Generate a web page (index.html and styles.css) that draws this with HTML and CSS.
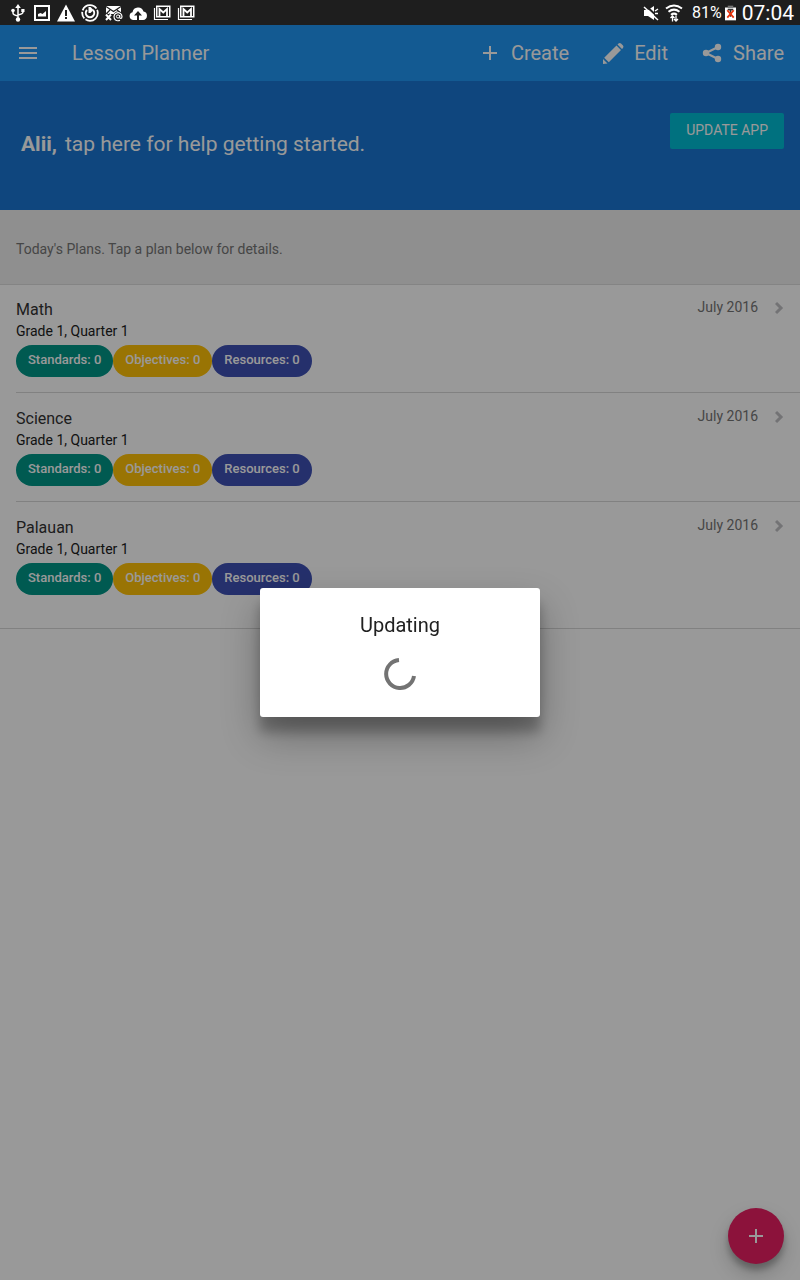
FILE: index.html
```html
<!DOCTYPE html>
<html lang="en">
<head>
<meta charset="utf-8">
<meta name="viewport" content="width=device-width, initial-scale=1">
<title>Lesson Planner</title>
<link rel="stylesheet" href="styles.css">
</head>
<body>
<div class="status">
  <div class="status-group status-left">
    <svg class="status-icon" viewBox="0 0 18 18"><path d="M9 3v11M4 6.500V9q0 2 5 3M14 6v2q0 2-5 3" fill="none" stroke="#fff" stroke-width="1.500"/><path d="M9 0l2.800 4H6.200zM12.300 5h3.200v3h-3.200z" fill="#fff"/><circle cx="4" cy="6.500" r="1.800" fill="#fff"/><circle cx="9" cy="15.500" r="2.200" fill="#fff"/></svg>
    <svg class="status-icon" viewBox="0 0 18 18"><path d="M2 2h14v14H2z" fill="none" stroke="#fff" stroke-width="2"/><path d="M5 12.500V10l2.500-1 2 1L13 7v5.500z" fill="#fff"/></svg>
    <svg class="status-icon" viewBox="0 0 18 18"><path d="M9 .5L18 17.500H0z" fill="#fff"/><path d="M9 6v6M9 13v2" stroke="#1e1e1e" stroke-width="2"/></svg>
    <svg class="status-icon" viewBox="0 0 18 18"><g fill="none" stroke="#fff"><circle cx="9" cy="9" r="7.800" stroke-width="1.800" stroke-dasharray="17 1.500 7 1.500"/><path d="M6 6A4.200 4.200 0 1 0 12 6" stroke-width="2"/></g><path d="M7.500 3h2l3 3-3 3h-2z" fill="#fff"/></svg>
    <svg class="status-icon" viewBox="0 0 18 18"><path d="M1 2h15v8H1z" fill="#fff"/><path d="M1 2.500l7.500 5 7.500-5M1 10l4-4M16 9l-4-3" fill="none" stroke="#1e1e1e" stroke-width="1.200"/><path d="M1 10.500l5 5.500M6 10.500L1 16" stroke="#1e1e1e" stroke-width="4"/><path d="M1 10.500l5 5.500M6 10.500L1 16" stroke="#fff" stroke-width="2"/><circle cx="13" cy="12.500" r="5" fill="#1e1e1e"/><path d="M15 16.200A4 4 0 1 1 17 12.500q0 2-1.300 2-1 0-1-1.500v-2" fill="none" stroke="#fff" stroke-width="1.200"/><circle cx="13" cy="12.500" r="1.600" fill="none" stroke="#fff"/></svg>
    <svg class="status-icon" viewBox="0 0 18 18"><path d="M4 16a4 4 0 0 1-.5-7.800A5.700 5.700 0 0 1 14.500 7.500 4.300 4.300 0 0 1 14 16z" fill="#fff"/><path d="M9 7l4 4.500h-3V16H8v-4.500H5z" fill="#1e1e1e"/></svg>
    <svg class="status-icon" viewBox="0 0 18 18"><g fill="none" stroke="#fff"><path d="M3.750 2.250h13v10.500h-13z" stroke-width="1.500"/><path d="M1.500 4v11.500H15" stroke-width="1.200"/><path d="M6.500 12V5l3.750 3.500L14 5v7" stroke-width="1.800"/></g></svg>
    <svg class="status-icon" viewBox="0 0 18 18"><g fill="none" stroke="#fff"><path d="M3.750 2.250h13v10.500h-13z" stroke-width="1.500"/><path d="M1.500 4v11.500H15" stroke-width="1.200"/><path d="M6.500 12V5l3.750 3.500L14 5v7" stroke-width="1.800"/></g></svg>
  </div>
  <div class="status-group status-right">
    <svg class="status-icon" viewBox="0 0 18 18"><path d="M2 6h4l6-4v14l-6-4H2z" fill="#fff"/><path d="M3 1l14 13" stroke="#1e1e1e" stroke-width="2"/><path d="M2 3l14 13M13 7l3-2M13 9.500h3" stroke="#fff" stroke-width="1.500"/></svg>
    <svg class="status-icon wifi" viewBox="0 0 18 18"><g fill="none" stroke="#fff" stroke-width="2"><path d="M1 4.500Q9-1.500 17 4.500M3.500 7.800Q9 3.500 14.500 7.800M6 10.800Q9 8.500 12 10.800"/></g><path d="M7.500 17.500V12M5.500 14l2-2 2 2M11 11.500V17M9 15l2 2 2-2" fill="none" stroke="#fff" stroke-width="1.300"/></svg>
    <span class="percent">81%</span>
    <svg class="battery" viewBox="0 0 12 16"><path d="M0 2h12v14H0z" fill="#fff"/><path d="M3 0h6v3H3z" fill="#777"/><path d="M3 4.500h6M6 4v8" stroke="#333" stroke-width="1.500"/><path d="M2.500 5l7 8M9.500 5l-7 8" stroke="#e8320a" stroke-width="2"/></svg>
    <time class="clock">07:04</time>
  </div>
</div>
<div class="app">
  <header class="navbar">
    <button class="menu" type="button" aria-label="Menu"><svg width="18" height="12" viewBox="0 0 18 12"><path d="M0 0h18v2H0zM0 5h18v2H0zM0 10h18v2H0z" fill="currentColor"/></svg></button>
    <h1 class="title">Lesson Planner</h1>
    <nav class="actions">
      <a class="action" href="#create"><svg class="icon" viewBox="0 0 24 24"><path d="M19 13h-6v6h-2v-6H5v-2h6V5h2v6h6z"/></svg>Create</a>
      <a class="action" href="#edit"><svg class="icon" viewBox="0 0 24 24"><path d="M2 18l4.500 4.500L2 23zM3.200 16.700L15.500 4.500l4.500 4.500L7.800 21.300zM16.500 3.500l1-1q1.200-1 2.500 0l2 2q1 1.200 0 2.500l-1 1z"/></svg>Edit</a>
      <a class="action" href="#share"><svg class="icon" viewBox="0 0 24 24"><path d="M6 12l12-6M6 12l12 6" stroke="currentColor" stroke-width="2"/><circle cx="6" cy="12" r="3.200"/><circle cx="18" cy="6" r="3.200"/><circle cx="18" cy="18" r="3.200"/></svg>Share</a>
    </nav>
  </header>
  <section class="banner">
    <a class="help" href="#help"><strong>Alii,</strong><span>tap here for help getting started.</span></a>
    <button class="update" type="button">UPDATE APP</button>
  </section>
  <p class="intro">Today's Plans. Tap a plan below for details.</p>
  <ul class="plans">
    <li class="plan"><a class="plan-link" href="#math">
      <div class="plan-main"><h2 class="subject">Math</h2><p class="grade">Grade 1, Quarter 1</p>
      <div class="chips"><span class="chip teal">Standards: 0</span><span class="chip amber">Objectives: 0</span><span class="chip indigo">Resources: 0</span></div></div>
      <span class="date">July 2016</span><svg class="chevron" viewBox="0 0 9 14"><path d="M1 2l5 5-5 5"/></svg></a></li>
    <li class="plan"><a class="plan-link" href="#science">
      <div class="plan-main"><h2 class="subject">Science</h2><p class="grade">Grade 1, Quarter 1</p>
      <div class="chips"><span class="chip teal">Standards: 0</span><span class="chip amber">Objectives: 0</span><span class="chip indigo">Resources: 0</span></div></div>
      <span class="date">July 2016</span><svg class="chevron" viewBox="0 0 9 14"><path d="M1 2l5 5-5 5"/></svg></a></li>
    <li class="plan"><a class="plan-link" href="#palauan">
      <div class="plan-main"><h2 class="subject">Palauan</h2><p class="grade">Grade 1, Quarter 1</p>
      <div class="chips"><span class="chip teal">Standards: 0</span><span class="chip amber">Objectives: 0</span><span class="chip indigo">Resources: 0</span></div></div>
      <span class="date">July 2016</span><svg class="chevron" viewBox="0 0 9 14"><path d="M1 2l5 5-5 5"/></svg></a></li>
  </ul>
  <button class="fab" type="button" aria-label="Add plan"><svg width="14" height="14" viewBox="0 0 14 14"><path d="M6 0h2v6h6v2H8v6H6V8H0V6h6z" fill="currentColor"/></svg></button>
  <div class="overlay"></div>
</div>
<div class="modal-layer">
  <div class="modal" role="dialog" aria-labelledby="modal-title">
    <h2 class="modal-title" id="modal-title">Updating</h2>
    <svg class="spinner" viewBox="0 0 32 32"><path d="M15 2A14 14 0 1 0 30 18" fill="none" stroke="#737373" stroke-width="4"/></svg>
  </div>
</div>
</body>
</html>
```
FILE: styles.css
```css
* { box-sizing: border-box; }
body {
  margin: 0;
  min-height: 100vh;
  display: flex;
  flex-direction: column;
  font-family: Roboto, "Noto Sans", sans-serif;
  font-size: 14px;
  color: #212121;
  background: #fff;
}
h1, h2, p, ul { margin: 0; padding: 0; font-weight: 400; }
ul { list-style: none; }
a { color: inherit; text-decoration: none; }
button { border: 0; padding: 0; font: inherit; color: #fff; background: none; }

.status {
  height: 25px;
  padding: 0 6px 0 9px;
  display: flex;
  align-items: center;
  justify-content: space-between;
  background: #1e1e1e;
  color: #fff;
}
.status-group { display: flex; align-items: center; }
.status-left { gap: 6px; }
.status-right { gap: 3px; }
.status-icon { width: 18px; height: 18px; }
.wifi { margin: 0 6px 0 2px; }
.percent { font-size: 16px; }
.battery { width: 11px; height: 16px; }
.clock { font-size: 21px; line-height: 24px; margin-left: 3px; }

.app { position: relative; flex: 1; }
.overlay { position: absolute; inset: 0; background: rgba(0, 0, 0, .4); }

.navbar {
  height: 56px;
  padding: 0 16px;
  display: flex;
  align-items: center;
  color: #fff;
  background: #2196f3;
}
.menu { width: 24px; height: 24px; display: grid; place-items: center; }
.title { margin-left: 32px; font-size: 20px; line-height: 24px; }
.actions { margin-left: auto; display: flex; gap: 32px; }
.action { display: flex; align-items: center; gap: 9px; font-size: 20px; line-height: 24px; }
.icon { width: 24px; height: 24px; fill: currentColor; }

.banner {
  min-height: 129px;
  padding: 32px 16px 32px 21px;
  display: flex;
  justify-content: space-between;
  align-items: flex-start;
  color: #fff;
  background: #1976d2;
}
.help { display: flex; gap: 8px; padding-top: 18px; font-size: 21px; line-height: 26px; }
.update {
  height: 36px;
  padding: 0 16px 2px;
  border-radius: 2px;
  font-size: 14px;
  background: #00bcd4;
}
.intro {
  padding: 29px 16px 25px;
  line-height: 20px;
  color: #757575;
  background: #eee;
  border-bottom: 1px solid #ddd;
}
.plans { border-bottom: 1px solid #d8d8d8; padding-bottom: 18px; }
.plan { padding-left: 16px; }
.plan-link {
  display: flex;
  align-items: flex-start;
  padding: 14px 16px 15px 0;
}
.plan + .plan .plan-link { border-top: 1px solid #d8d8d8; padding-top: 15px; }
.plan-main { flex: 1; }
.subject { font-size: 16px; line-height: 21px; color: #333; }
.grade { line-height: 23px; }
.chips { display: flex; margin-top: 2px; }
.chip {
  height: 32px;
  padding: 0 12px;
  border-radius: 16px;
  font-size: 13px;
  font-weight: 500;
  line-height: 30px;
  color: #fff;
}
.teal { background: #009688; }
.amber { background: #ffc107; }
.indigo { background: #3f51b5; }
.date { color: #757575; line-height: 16px; }
.chevron { width: 9px; height: 14px; margin: 2px 0 0 17px; fill: none; stroke: #c0c0c4; stroke-width: 3; }

.fab {
  position: fixed;
  right: 16px;
  bottom: 16px;
  width: 56px;
  height: 56px;
  border-radius: 50%;
  display: grid;
  place-items: center;
  background: #e91e63;
  box-shadow: 0 10px 20px rgba(0, 0, 0, .2), 0 6px 6px rgba(0, 0, 0, .24);
}
.modal-layer {
  position: fixed;
  inset: 25px 0 0;
  display: grid;
  place-items: center;
}
.modal {
  width: 280px;
  padding: 24px 24px 27px;
  display: flex;
  flex-direction: column;
  align-items: center;
  gap: 20px;
  border-radius: 3px;
  background: #fff;
  box-shadow: 0 19px 38px rgba(0, 0, 0, .3), 0 15px 12px rgba(0, 0, 0, .24);
}
.modal-title { font-size: 20px; line-height: 26px; }
.spinner { width: 32px; height: 32px; }
```
